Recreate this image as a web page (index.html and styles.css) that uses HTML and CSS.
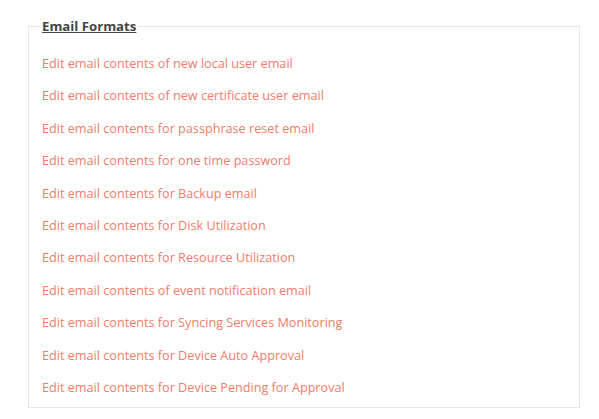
FILE: index.html
```html
<!DOCTYPE html>
<html>
<head>
<meta charset="utf-8">
<link rel="stylesheet" href="styles.css">
</head>
<body>
<div class="page">
  <fieldset class="formats">
    <legend class="formats-title">Email Formats</legend>
    <ul class="links">
      <li><a href="#">Edit email contents of new local user email</a></li>
      <li><a href="#">Edit email contents of new certificate user email</a></li>
      <li><a href="#">Edit email contents for passphrase reset email</a></li>
      <li><a href="#">Edit email contents for one time password</a></li>
      <li><a href="#">Edit email contents for Backup email</a></li>
      <li><a href="#">Edit email contents for Disk Utilization</a></li>
      <li><a href="#">Edit email contents for Resource Utilization</a></li>
      <li><a href="#">Edit email contents of event notification email</a></li>
      <li><a href="#">Edit email contents for Syncing Services Monitoring</a></li>
      <li><a href="#">Edit email contents for Device Auto Approval</a></li>
      <li><a href="#">Edit email contents for Device Pending for Approval</a></li>
    </ul>
  </fieldset>
</div>
</body>
</html>
```
FILE: styles.css
```css
html, body {
  margin: 0;
  padding: 0;
  background: #ffffff;
}
body {
  font-family: "Open Sans", "Noto Sans", sans-serif;
  font-size: 12.65px;
}
.page {
  padding: 17px 19px 0 28px;
}
.formats {
  margin: 0;
  border: 1px solid #e6e6e6;
  padding: 0 13px 11px 13px;
  min-width: 0;
}
.formats-title {
  margin-left: -2px;
  padding: 0 2px;
  font-weight: bold;
  font-size: 13.2px;
  color: #444444;
  text-decoration: underline;
}
.links {
  list-style: none;
  margin: 0;
  padding: 19px 0 0 0;
  display: flex;
  flex-direction: column;
  gap: 14.4px;
}
.links li {
  height: 18px;
  line-height: 18px;
}
.links a {
  color: #f27c6a;
  text-decoration: none;
}
```
